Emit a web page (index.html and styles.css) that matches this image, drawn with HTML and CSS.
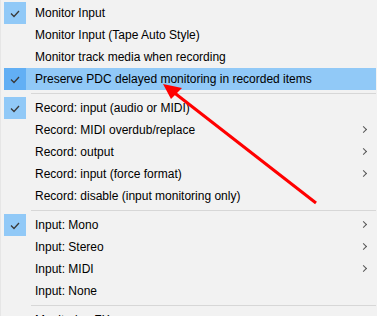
FILE: index.html
```html
<!DOCTYPE html>
<html lang="en">
<head>
  <meta charset="UTF-8" />
  <title>Track input menu</title>
  <link rel="stylesheet" href="styles.css">
</head>
<body>

<div class="menu">
  <div class="item"><span class="check"><svg width="22" height="22" viewBox="0 0 22 22"><polyline points="7,11.5 10,14.5 15,9" /></svg></span><span class="label">Monitor Input</span></div>
  <div class="item"><span class="check off"></span><span class="label">Monitor Input (Tape Auto Style)</span></div>
  <div class="item"><span class="check off"></span><span class="label">Monitor track media when recording</span></div>
  <div class="item active"><span class="check"><svg width="22" height="22" viewBox="0 0 22 22"><polyline points="7,11.5 10,14.5 15,9" /></svg></span><span class="label">Preserve PDC delayed monitoring in recorded items</span></div>
  <div class="sep"></div>
  <div class="item"><span class="check"><svg width="22" height="22" viewBox="0 0 22 22"><polyline points="7,11.5 10,14.5 15,9" /></svg></span><span class="label">Record: input (audio or MIDI)</span></div>
  <div class="item sub"><span class="check off"></span><span class="label">Record: MIDI overdub/replace</span></div>
  <div class="item sub"><span class="check off"></span><span class="label">Record: output</span></div>
  <div class="item sub"><span class="check off"></span><span class="label">Record: input (force format)</span></div>
  <div class="item"><span class="check off"></span><span class="label">Record: disable (input monitoring only)</span></div>
  <div class="sep"></div>
  <div class="item sub"><span class="check"><svg width="22" height="22" viewBox="0 0 22 22"><polyline points="7,11.5 10,14.5 15,9" /></svg></span><span class="label">Input: Mono</span></div>
  <div class="item sub"><span class="check off"></span><span class="label">Input: Stereo</span></div>
  <div class="item sub"><span class="check off"></span><span class="label">Input: MIDI</span></div>
  <div class="item"><span class="check off"></span><span class="label">Input: None</span></div>
  <div class="sep"></div>
  <div class="item"><span class="check off"></span><span class="label">Monitoring FX</span></div>
</div>

<svg class="pointer" width="377" height="316" viewBox="0 0 377 316">
  <line x1="316" y1="203" x2="172" y2="91" />
  <polygon points="163,84 182,88 171,99" />
</svg>

</body>
</html>
```

FILE: styles.css
```css
body {
  margin: 0;
  background: #f0f0f0;
  font-family: "Liberation Sans", Arial, sans-serif;
  font-size: 12px;
  color: #000;
  overflow: hidden;
}
.menu {
  width: 377px;
  height: 316px;
  padding: 2px 1px 0 3px;
  box-sizing: border-box;
  background: #f2f2f2;
  border-left: 1px solid #e6e6e6;
  overflow: hidden;
}
.item {
  display: flex;
  align-items: center;
  height: 22px;
  position: relative;
}
.item.active {
  background: #91c9f7;
}
.check {
  width: 22px;
  height: 22px;
  flex: none;
  background: #91c9f7;
}
.check.off {
  background: none;
}
.active .check {
  background: #62aff4;
}
.check svg {
  display: block;
}
.check polyline {
  fill: none;
  stroke: #3a3a3a;
  stroke-width: 1.3;
}
.label {
  margin-left: 9px;
  white-space: nowrap;
}
.sub::after {
  content: "";
  position: absolute;
  right: 10px;
  top: 8px;
  width: 4px;
  height: 4px;
  border-top: 1px solid #555;
  border-right: 1px solid #555;
  transform: rotate(45deg);
}
.sep {
  height: 7px;
  margin-left: 27px;
  box-sizing: border-box;
  border-top: 3px solid transparent;
  position: relative;
}
.sep::before {
  content: "";
  display: block;
  height: 1px;
  background: #d7d7d7;
}
.pointer {
  position: absolute;
  left: 0;
  top: 0;
}
.pointer line {
  stroke: #ff0000;
  stroke-width: 3;
}
.pointer polygon {
  fill: #ff0000;
}
```
